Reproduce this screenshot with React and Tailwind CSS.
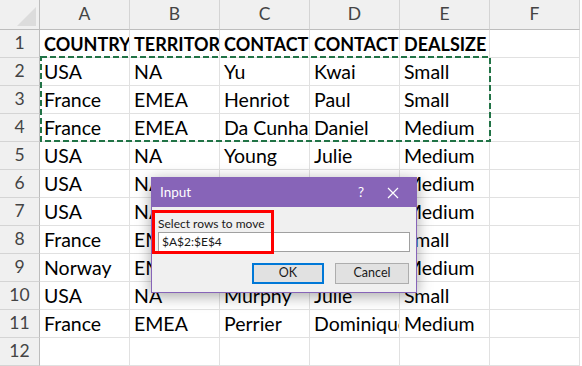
import React from "react";

const cols = ["A", "B", "C", "D", "E", "F"];

const rows = [
  ["COUNTRY", "TERRITORY", "CONTACTLASTNAME", "CONTACTFIRSTNAME", "DEALSIZE", ""],
  ["USA", "NA", "Yu", "Kwai", "Small", ""],
  ["France", "EMEA", "Henriot", "Paul", "Small", ""],
  ["France", "EMEA", "Da Cunha", "Daniel", "Medium", ""],
  ["USA", "NA", "Young", "Julie", "Medium", ""],
  ["USA", "NA", "", "", "Medium", ""],
  ["USA", "NA", "", "", "Medium", ""],
  ["France", "EMEA", "", "", "Small", ""],
  ["Norway", "EMEA", "", "", "Medium", ""],
  ["USA", "NA", "Murphy", "Julie", "Small", ""],
  ["France", "EMEA", "Perrier", "Dominique", "Medium", ""],
  ["", "", "", "", "", ""],
];

function InputDialog() {
  return (
    <div className="absolute left-[151px] top-[177px] w-[266px] h-[116px] border border-[#8764b8] bg-[#f0f0f0] shadow-[0_3px_14px_rgba(0,0,0,0.35)] font-['Lato',sans-serif]">
      {/* title bar */}
      <div className="h-[29px] bg-[#8764b8] flex items-center pl-[8px] text-white text-[13.5px]">
        <span className="flex-1">Input</span>
        <span className="w-[20px] text-center mr-[16px]">?</span>
        <svg width="12" height="12" viewBox="0 0 12 12" className="mr-[17px]">
          <path d="M1 1 L11 11 M11 1 L1 11" stroke="white" strokeWidth="1.2" />
        </svg>
      </div>
      <div className="px-[6px] pt-[9px] text-[12px] text-[#1a1a1a]">
        <div className="leading-[15px]">Select rows to move</div>
        <div className="mt-[1px] h-[20px] w-[252px] bg-white border border-[#a0a0a0] flex items-center pl-[3px] text-[12px]">
          $A$2:$E$4
        </div>
        <div className="mt-[11px] flex justify-end gap-[11px] pr-[1px]">
          <div className="w-[72px] h-[21px] border-2 border-[#0078d7] bg-[#e1e1e1] flex items-center justify-center text-[12.5px]">
            OK
          </div>
          <div className="w-[74px] h-[21px] border border-[#adadad] bg-[#e1e1e1] flex items-center justify-center text-[12.5px]">
            Cancel
          </div>
        </div>
      </div>
      {/* red highlight */}
      <div className="absolute left-[0px] top-[32px] w-[122px] h-[44px] border-[3px] border-[#ff0000]" />
    </div>
  );
}

export default function App() {
  return (
    <div className="relative w-[582px] h-[366px] bg-white overflow-hidden font-['Lato',sans-serif]">
      <div className="grid grid-cols-[40px_repeat(6,90px)] grid-rows-[30px_repeat(12,28px)]">
        {/* corner */}
        <div className="bg-[#f0f0f0] border-r border-b border-[#bdbdbd] relative">
          <svg width="40" height="30" className="absolute left-0 top-0">
            <polygon points="17,26 36,7 36,26" fill="#dcdcdc" />
          </svg>
        </div>
        {cols.map((c) => (
          <div
            key={c}
            className="bg-[#f0f0f0] border-r border-b border-r-[#d4d4d4] border-b-[#bdbdbd] flex items-center justify-center text-[17.5px] text-[#444]"
          >
            {c}
          </div>
        ))}
        {rows.map((r, i) => (
          <React.Fragment key={i}>
            <div className="bg-[#f0f0f0] border-r border-b border-r-[#bdbdbd] border-b-[#d4d4d4] flex items-center justify-center text-[17.5px] text-[#444]">
              {i + 1}
            </div>
            {r.map((v, j) => (
              <div
                key={j}
                className={
                  "border-r border-b border-[#e1e1e1] overflow-hidden whitespace-nowrap flex items-end pl-[4px] pb-[2px] leading-[22px] text-black " +
                  (i === 0 ? "font-bold text-[18px]" : "text-[19.5px]")
                }
              >
                {v}
              </div>
            ))}
          </React.Fragment>
        ))}
      </div>

      {/* copy marquee */}
      <svg className="absolute left-[40px] top-[56px]" width="451" height="86">
        <rect x="1" y="1" width="449" height="84" fill="none" stroke="#217346" strokeWidth="2" strokeDasharray="6 3" />
      </svg>

      <InputDialog />
    </div>
  );
}
